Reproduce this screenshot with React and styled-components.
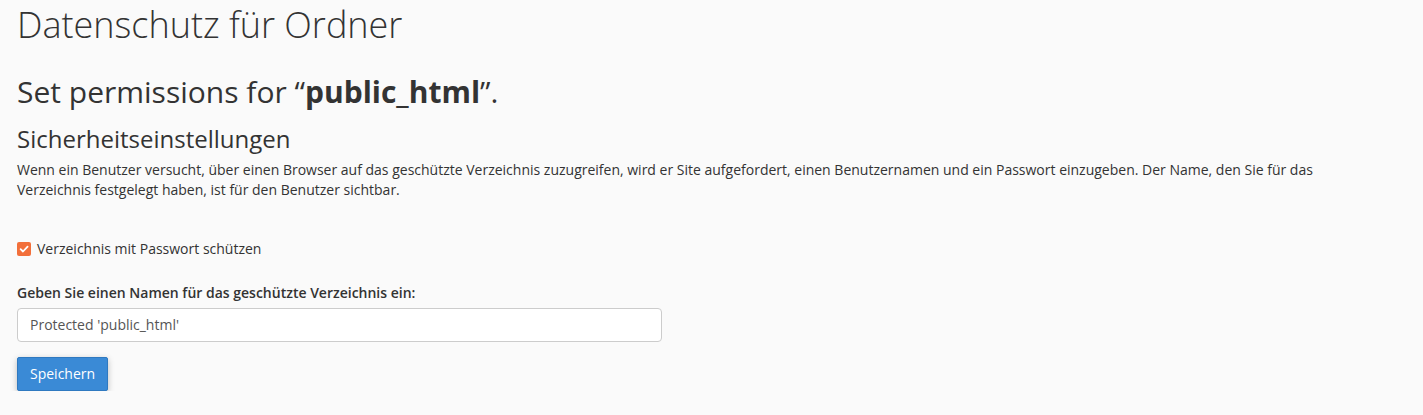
import React, { useState } from "react";
import styled, { createGlobalStyle } from "styled-components";

const Global = createGlobalStyle`
  html, body {
    margin: 0;
    padding: 0;
    background: #fafafa;
  }
  body {
    font-family: "Open Sans", "Noto Sans", sans-serif;
    color: #333;
  }
`;

const Page = styled.div`
  padding: 5px 17px 0 17px;
  max-width: 1300px;
`;

const Title = styled.h1`
  margin: 0;
  font-size: 36px;
  font-weight: 300;
  line-height: 1.1;
  color: #333;
`;

const SubTitle = styled.h2`
  margin: 30px 0 0;
  font-size: 30px;
  font-weight: 400;
  line-height: 1.1;

  strong {
    font-weight: 700;
  }
`;

const SectionTitle = styled.h3`
  margin: 18px 0 0;
  font-size: 24px;
  font-weight: 400;
  line-height: 1.1;
`;

const Text = styled.p`
  margin: 8px 0 0;
  font-size: 14px;
  line-height: 20px;
`;

const CheckRow = styled.label`
  display: flex;
  align-items: center;
  gap: 6px;
  margin-top: 39px;
  font-size: 14px;
  line-height: 20px;
  cursor: pointer;
`;

const Box = styled.span`
  width: 14px;
  height: 14px;
  border-radius: 2px;
  background: ${(p) => (p.checked ? "#f26f3a" : "#fff")};
  border: ${(p) => (p.checked ? "none" : "1px solid #999")};
  display: flex;
  align-items: center;
  justify-content: center;
`;

const HiddenInput = styled.input`
  display: none;
`;

const Field = styled.div`
  display: flex;
  flex-direction: column;
  margin-top: 24px;
`;

const FieldLabel = styled.label`
  font-size: 14px;
  font-weight: 600;
  line-height: 20px;
  margin-bottom: 5px;
`;

const TextInput = styled.input`
  box-sizing: border-box;
  width: 645px;
  height: 34px;
  padding: 6px 12px;
  font-family: "Open Sans", "Noto Sans", sans-serif;
  font-size: 14px;
  color: #555;
  background: #fff;
  border: 1px solid #ccc;
  border-radius: 4px;
  outline: none;
`;

const Button = styled.button`
  align-self: flex-start;
  margin-top: 15px;
  height: 34px;
  padding: 0 12px;
  font-family: "Open Sans", "Noto Sans", sans-serif;
  font-size: 14px;
  color: #fff;
  background: #3a8ad6;
  border: 1px solid #2f79c0;
  border-radius: 2px;
  box-shadow: 0 2px 6px rgba(0, 0, 0, 0.25);
  cursor: pointer;
`;

const Form = styled.div`
  display: flex;
  flex-direction: column;
`;

export default function App() {
  const [checked, setChecked] = useState(true);
  const [name, setName] = useState("Protected 'public_html'");

  return (
    <>
      <Global />
      <Page>
        <Title>Datenschutz für Ordner</Title>
        <SubTitle>
          Set permissions for “<strong>public_html</strong>”.
        </SubTitle>
        <SectionTitle>Sicherheitseinstellungen</SectionTitle>
        <Text>
          Wenn ein Benutzer versucht, über einen Browser auf das geschützte Verzeichnis zuzugreifen, wird er Site
          aufgefordert, einen Benutzernamen und ein Passwort einzugeben. Der Name, den Sie für das Verzeichnis
          festgelegt haben, ist für den Benutzer sichtbar.
        </Text>
        <Form>
          <CheckRow>
            <HiddenInput type="checkbox" checked={checked} onChange={() => setChecked(!checked)} />
            <Box checked={checked}>
              {checked && (
                <svg width="10" height="10" viewBox="0 0 10 10">
                  <path d="M1.6 5.2 L4 7.5 L8.6 2.6" fill="none" stroke="#fff" strokeWidth="1.8" strokeLinecap="round" strokeLinejoin="round" />
                </svg>
              )}
            </Box>
            Verzeichnis mit Passwort schützen
          </CheckRow>
          <Field>
            <FieldLabel htmlFor="dirname">Geben Sie einen Namen für das geschützte Verzeichnis ein:</FieldLabel>
            <TextInput id="dirname" value={name} onChange={(e) => setName(e.target.value)} />
            <Button>Speichern</Button>
          </Field>
        </Form>
      </Page>
    </>
  );
}
